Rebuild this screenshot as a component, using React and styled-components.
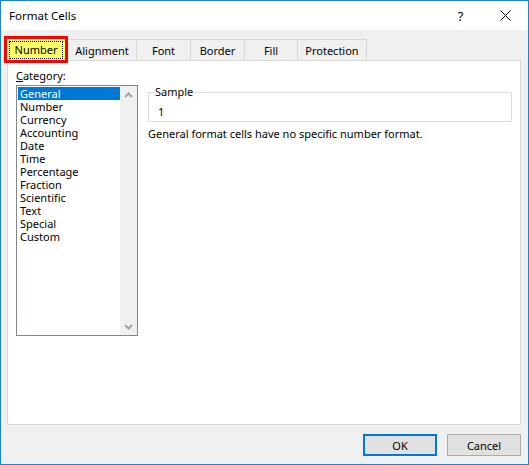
import styled, { createGlobalStyle } from 'styled-components';

const GlobalStyle = createGlobalStyle`
html, body {
  margin: 0;
  padding: 0;
  background: #ffffff;
}
body {
  font-family: 'Noto Sans', 'Open Sans', sans-serif;
  font-size: 11px;
  color: #000000;
}
`;

const Window = styled.div`
width: 529px;
height: 465px;
box-sizing: border-box;
border: 1px solid #1883d7;
display: flex;
flex-direction: column;
background: #f0f0f0;
`;

const TitleBar = styled.div`
height: 29px;
background: #ffffff;
display: flex;
align-items: center;
padding-left: 8px;
`;

const Title = styled.span`
flex: 1;
font-size: 11.5px;
`;

const TitleButton = styled.div`
width: 45px;
height: 29px;
display: flex;
align-items: center;
justify-content: center;
font-size: 13px;
`;

const Body = styled.div`
flex: 1;
display: flex;
flex-direction: column;
padding: 6px 7px 0 6px;
`;

const TabRow = styled.div`
display: flex;
align-items: flex-end;
height: 24px;
margin-left: -3px;
`;

const Tab = styled.div`
box-sizing: border-box;
width: ${p => p.$w}px;
height: 21px;
border: 1px solid #d9d9d9;
border-bottom: none;
margin-left: -1px;
display: flex;
align-items: center;
justify-content: center;
padding-top: 1px;
`;

const ActiveTab = styled.div`
box-sizing: border-box;
position: relative;
z-index: 2;
width: 64px;
height: 27px;
margin-bottom: -3px;
border: 3px solid #ff0000;
background: #ffff66;
display: flex;
align-items: center;
justify-content: center;
padding-top: 1px;
`;

const FocusLabel = styled.span`
border: 1px dotted #000000;
padding: 1px 5px 2px;
line-height: 13px;
`;

const Panel = styled.div`
box-sizing: border-box;
height: 365px;
background: #ffffff;
border: 1px solid #d9d9d9;
display: flex;
gap: 10px;
padding: 7px 8px 0 8px;
`;

const CategoryColumn = styled.div`
display: flex;
flex-direction: column;
`;

const Label = styled.div`
line-height: 15px;
margin-bottom: 2px;
`;

const ListBox = styled.div`
box-sizing: border-box;
width: 122px;
height: 251px;
border: 1px solid #828790;
display: flex;
`;

const Items = styled.div`
flex: 1;
padding: 1px 0 0 1px;
`;

const Item = styled.div`
height: 13px;
line-height: 13px;
padding-left: 2px;
background: ${p => (p.$selected ? '#0078d7' : 'transparent')};
color: ${p => (p.$selected ? '#ffffff' : '#000000')};
`;

const ScrollBar = styled.div`
width: 17px;
background: #f0f0f0;
display: flex;
flex-direction: column;
justify-content: space-between;
align-items: center;
padding: 6px 0 5px;
`;

const Details = styled.div`
flex: 1;
display: flex;
flex-direction: column;
padding-top: 17px;
`;

const Group = styled.fieldset`
margin: 0;
height: 37px;
box-sizing: border-box;
border: 1px solid #dcdcdc;
padding: 0 9px;
`;

const Legend = styled.legend`
padding: 0 1px;
margin-left: -4px;
line-height: 14px;
`;

const SampleValue = styled.div`
line-height: 13px;
margin-top: 6px;
`;

const Description = styled.div`
margin-top: 5px;
line-height: 14px;
`;

const Footer = styled.div`
display: flex;
justify-content: flex-end;
gap: 10px;
padding-top: 9px;
`;

const Button = styled.button`
box-sizing: border-box;
width: 74px;
height: 22px;
background: #e1e1e1;
border: ${p => (p.$default ? '2px solid #0078d7' : '1px solid #adadad')};
font-family: inherit;
font-size: 11px;
color: #000000;
padding: 0;
`;

const Chevron = ({ up }) => (
  <svg width="9" height="6" viewBox="0 0 9 6">
    <path
      d={up ? 'M1 5 L4.5 1.5 L8 5' : 'M1 1 L4.5 4.5 L8 1'}
      fill="none"
      stroke="#a3a3a3"
      strokeWidth="2"
    />
  </svg>
);

const categories = [
  'General', 'Number', 'Currency', 'Accounting', 'Date', 'Time',
  'Percentage', 'Fraction', 'Scientific', 'Text', 'Special', 'Custom',
];

const tabs = [
  ['Alignment', 70], ['Font', 55], ['Border', 55], ['Fill', 54], ['Protection', 70],
];

export default function App() {
  return (
    <>
      <GlobalStyle />
      <Window>
        <TitleBar>
          <Title>Format Cells</Title>
          <TitleButton>?</TitleButton>
          <TitleButton>
            <svg width="11" height="11" viewBox="0 0 11 11">
              <path d="M0.5 0.5 L10.5 10.5 M10.5 0.5 L0.5 10.5" stroke="#000" strokeWidth="1" />
            </svg>
          </TitleButton>
        </TitleBar>
        <Body>
          <TabRow>
            <ActiveTab><FocusLabel>Number</FocusLabel></ActiveTab>
            {tabs.map(([name, w]) => (
              <Tab key={name} $w={w}>{name}</Tab>
            ))}
          </TabRow>
          <Panel>
            <CategoryColumn>
              <Label><u>C</u>ategory:</Label>
              <ListBox>
                <Items>
                  {categories.map((c, i) => (
                    <Item key={c} $selected={i === 0}>{c}</Item>
                  ))}
                </Items>
                <ScrollBar>
                  <Chevron up />
                  <Chevron />
                </ScrollBar>
              </ListBox>
            </CategoryColumn>
            <Details>
              <Group>
                <Legend>Sample</Legend>
                <SampleValue>1</SampleValue>
              </Group>
              <Description>General format cells have no specific number format.</Description>
            </Details>
          </Panel>
          <Footer>
            <Button $default>OK</Button>
            <Button>Cancel</Button>
          </Footer>
        </Body>
      </Window>
    </>
  );
}
